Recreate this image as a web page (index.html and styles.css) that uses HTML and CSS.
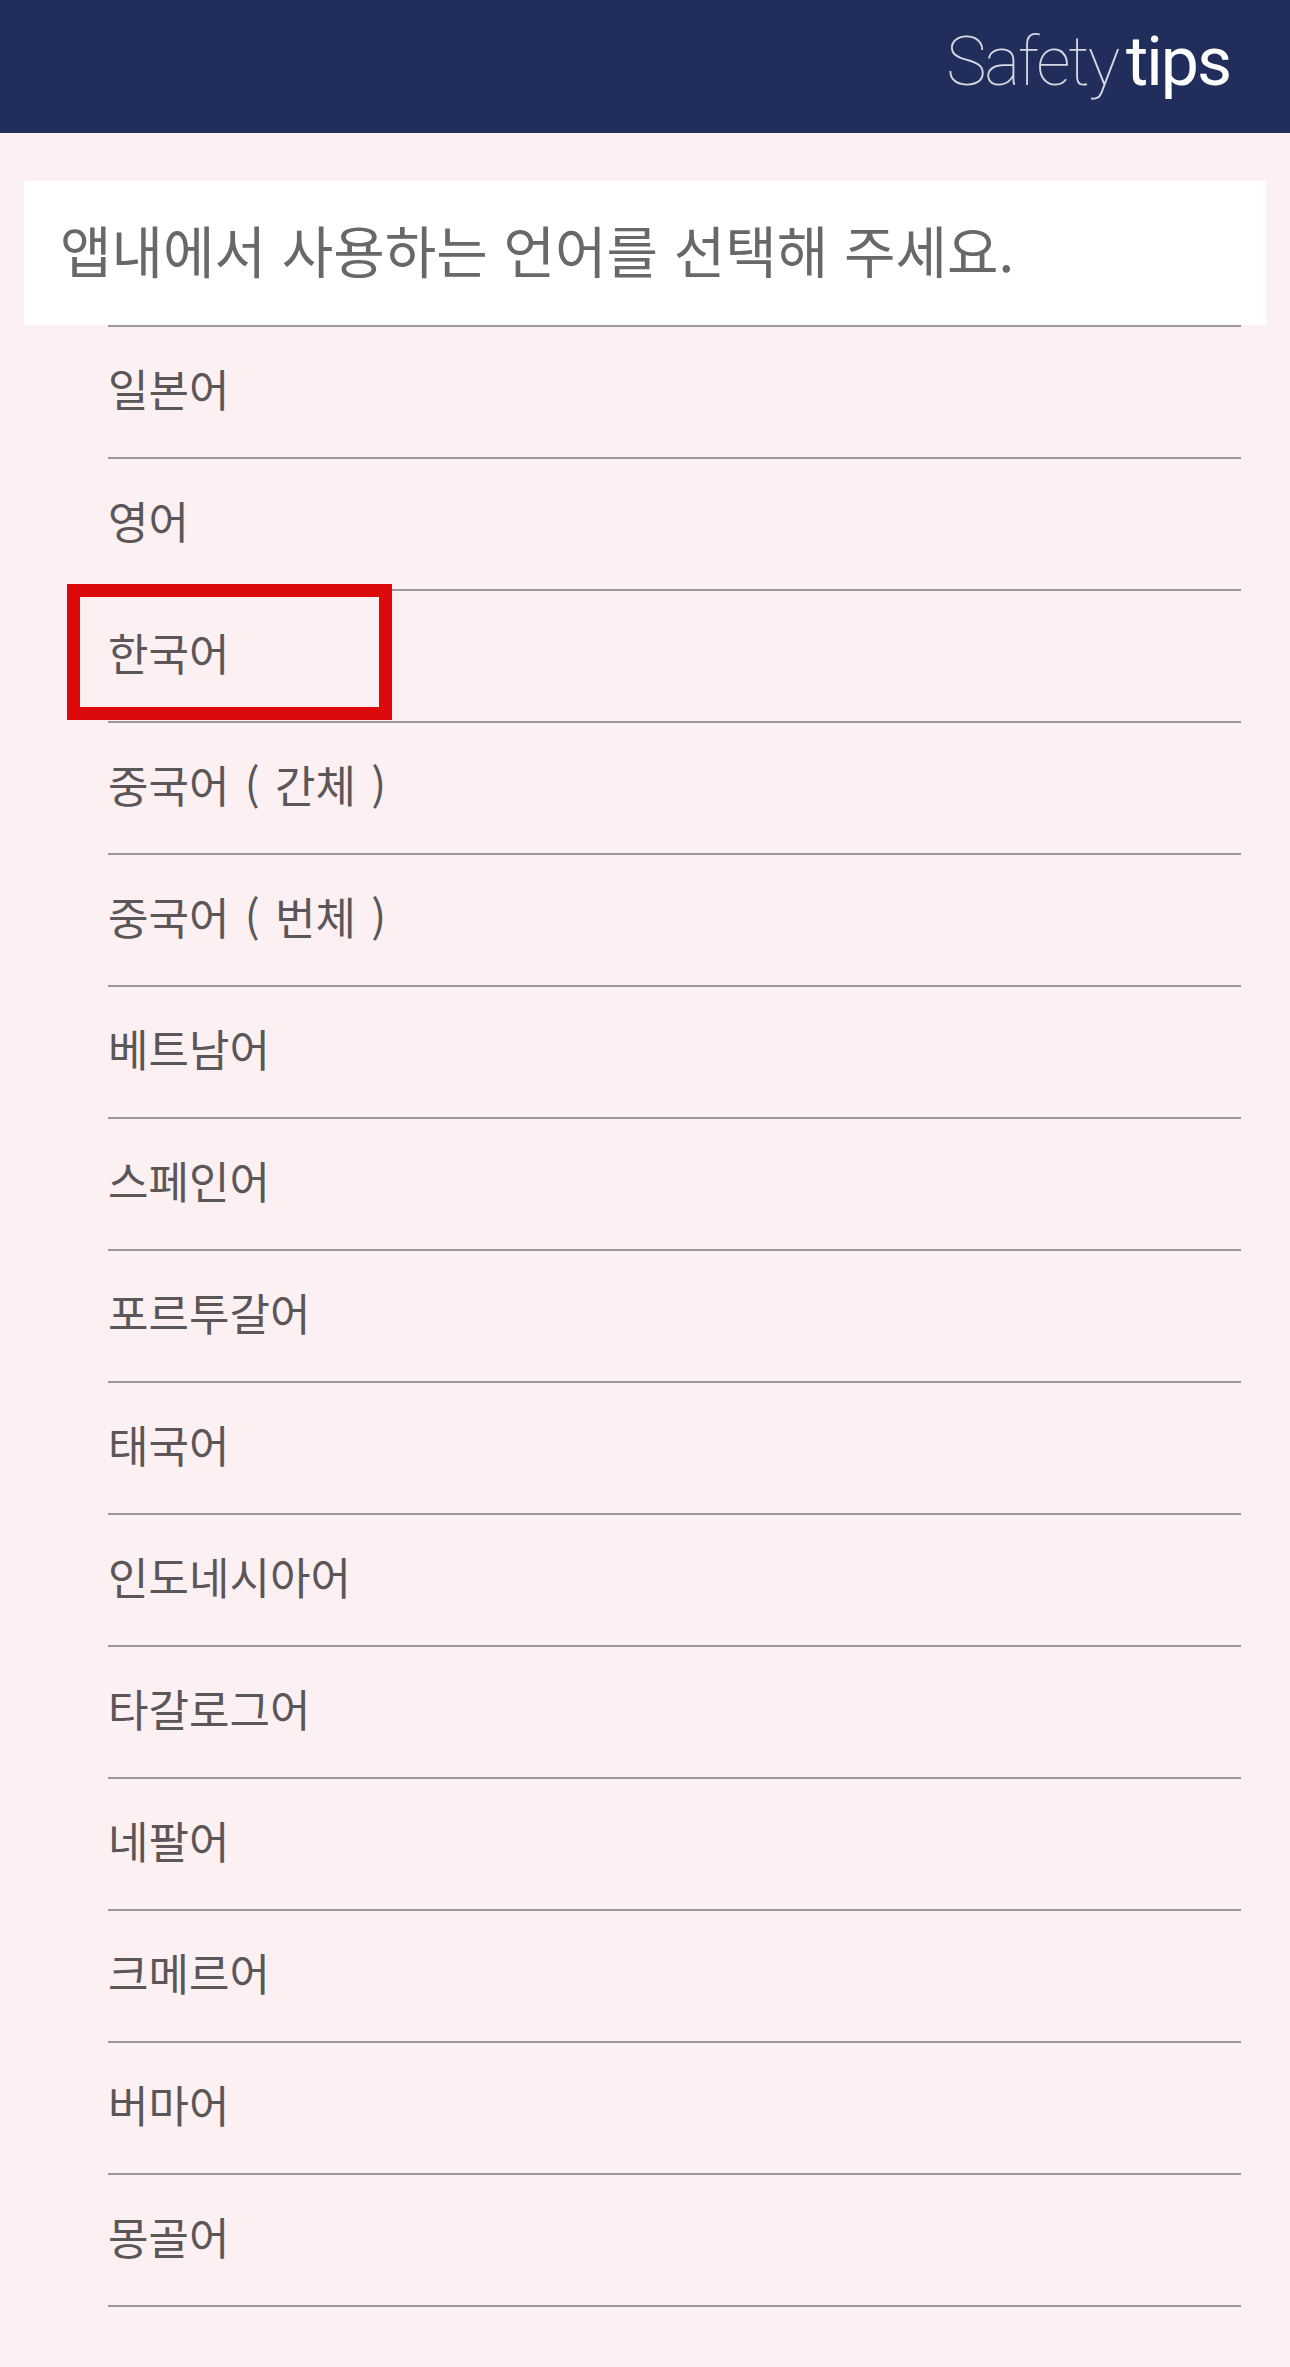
FILE: index.html
```html
<!DOCTYPE html>
<html lang="ko">
<head>
<meta charset="utf-8">
<title>Safety tips</title>
<link rel="stylesheet" href="styles.css">
</head>
<body>
<header class="app-bar">
  <div class="brand"><span class="brand-light">Safety</span><span class="brand-bold">tips</span></div>
</header>
<main class="content">
  <div class="prompt-card">
    <p class="prompt">앱내에서 사용하는 언어를 선택해 주세요.</p>
  </div>
  <ul class="lang-list">
    <li class="lang-item">일본어</li>
    <li class="lang-item">영어</li>
    <li class="lang-item is-marked">한국어<span class="marker"></span></li>
    <li class="lang-item">중국어 ( 간체 )</li>
    <li class="lang-item">중국어 ( 번체 )</li>
    <li class="lang-item">베트남어</li>
    <li class="lang-item">스페인어</li>
    <li class="lang-item">포르투갈어</li>
    <li class="lang-item">태국어</li>
    <li class="lang-item">인도네시아어</li>
    <li class="lang-item">타갈로그어</li>
    <li class="lang-item">네팔어</li>
    <li class="lang-item">크메르어</li>
    <li class="lang-item">버마어</li>
    <li class="lang-item">몽골어</li>
  </ul>
</main>
</body>
</html>
```

FILE: styles.css
```css
html, body {
  margin: 0;
  padding: 0;
}
body {
  background: #fdf0f3;
  font-family: "Noto Sans CJK KR", "Noto Sans", sans-serif;
  min-height: 2367px;
}
.app-bar {
  height: 133px;
  box-sizing: border-box;
  background: #212e5b;
  display: flex;
  justify-content: flex-end;
  align-items: flex-start;
  padding: 28px 60px 0 0;
}
.brand {
  font-family: Roboto, "Liberation Sans", sans-serif;
  font-size: 68px;
  line-height: 68px;
  white-space: nowrap;
  display: flex;
  gap: 8px;
}
.brand-light {
  font-weight: 100;
  color: #d6d7e0;
  letter-spacing: -2.2px;
}
.brand-bold {
  font-weight: 400;
  color: #ffffff;
  letter-spacing: -2px;
}
.content {
  padding-top: 48px;
}
.prompt-card {
  margin: 0 24px;
  height: 144px;
  box-sizing: border-box;
  background: #ffffff;
  display: flex;
  align-items: center;
  padding: 0 0 8px 36px;
}
.prompt {
  margin: 0;
  font-size: 56px;
  color: #6a6768;
  line-height: 1;
}
.lang-list {
  list-style: none;
  margin: 0 49px 0 108px;
  padding: 0;
  border-top: 2px solid #9d989a;
}
.lang-item {
  position: relative;
  height: 130px;
  box-sizing: border-box;
  padding-bottom: 8px;
  display: flex;
  align-items: center;
  border-bottom: 2px solid #9d989a;
  height: 132px;
  font-size: 44px;
  word-spacing: 3px;
  color: #5b5658;
  line-height: 1;
}
.marker {
  position: absolute;
  left: -41px;
  top: -7px;
  width: 325px;
  height: 136px;
  box-sizing: border-box;
  border: 13px solid #dc0a0a;
}
```
